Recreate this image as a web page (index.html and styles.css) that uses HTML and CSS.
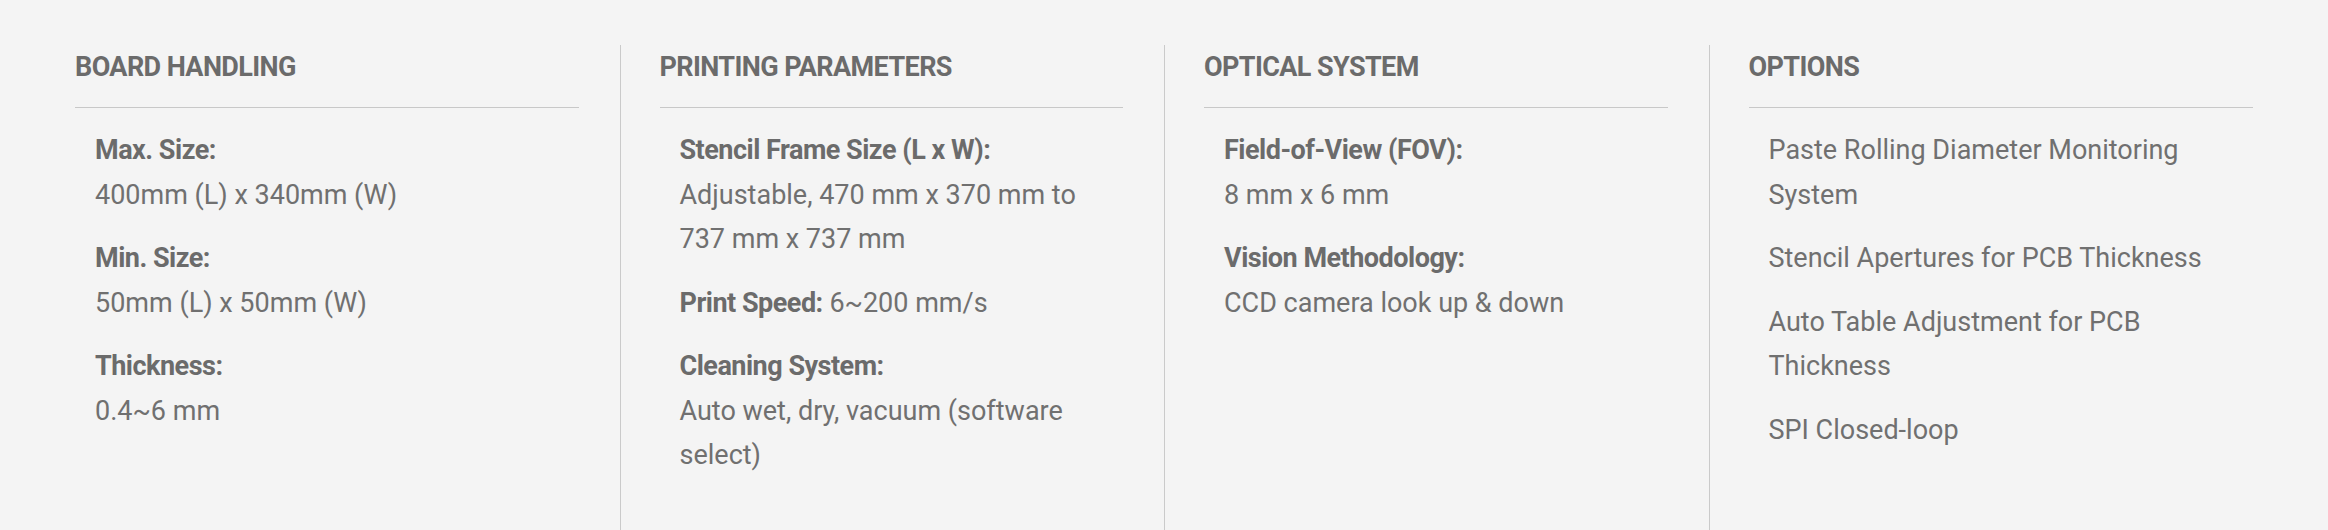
FILE: index.html
```html
<!DOCTYPE html>
<html lang="en">
<head>
<meta charset="utf-8">
<title>Specifications</title>
<link rel="stylesheet" href="styles.css">
</head>
<body>
<section class="specs">
  <div class="spec-col">
    <h3 class="spec-title">BOARD HANDLING</h3>
    <ul class="spec-list">
      <li class="spec-item"><strong class="spec-label">Max. Size:</strong>400mm (L) x 340mm (W)</li>
      <li class="spec-item"><strong class="spec-label">Min. Size:</strong>50mm (L) x 50mm (W)</li>
      <li class="spec-item"><strong class="spec-label">Thickness:</strong>0.4~6 mm</li>
    </ul>
  </div>
  <div class="spec-col">
    <h3 class="spec-title">PRINTING PARAMETERS</h3>
    <ul class="spec-list">
      <li class="spec-item"><strong class="spec-label">Stencil Frame Size (L x W):</strong>Adjustable, 470 mm x 370 mm to 737 mm x 737 mm</li>
      <li class="spec-item"><strong class="spec-label spec-label--inline">Print Speed:</strong> 6~200 mm/s</li>
      <li class="spec-item"><strong class="spec-label">Cleaning System:</strong>Auto wet, dry, vacuum (software select)</li>
    </ul>
  </div>
  <div class="spec-col">
    <h3 class="spec-title">OPTICAL SYSTEM</h3>
    <ul class="spec-list">
      <li class="spec-item"><strong class="spec-label">Field-of-View (FOV):</strong>8 mm x 6 mm</li>
      <li class="spec-item"><strong class="spec-label">Vision Methodology:</strong>CCD camera look up &amp; down</li>
    </ul>
  </div>
  <div class="spec-col">
    <h3 class="spec-title">OPTIONS</h3>
    <ul class="spec-list">
      <li class="spec-item">Paste Rolling Diameter Monitoring System</li>
      <li class="spec-item">Stencil Apertures for PCB Thickness</li>
      <li class="spec-item">Auto Table Adjustment for PCB Thickness</li>
      <li class="spec-item">SPI Closed-loop</li>
    </ul>
  </div>
</section>
</body>
</html>
```

FILE: styles.css
```css
* {
  box-sizing: border-box;
}

html, body {
  margin: 0;
  padding: 0;
}

body {
  background: #f4f4f4;
  color: #707070;
  font-family: Roboto, "Liberation Sans", sans-serif;
}

.specs {
  display: grid;
  grid-template-columns: repeat(4, 1fr);
  min-height: 100vh;
  padding: 45px 75px 0;
}

.spec-col {
  padding: 0 41px 0 39px;
  border-left: 1px solid #cacaca;
}

.spec-col:first-child {
  padding-left: 0;
  border-left: none;
}

.spec-col:last-child {
  padding-right: 0;
}

.spec-title {
  margin: 0;
  padding-bottom: 18px;
  border-bottom: 1px solid #c8c8c8;
  font-size: 27px;
  line-height: 44px;
  font-weight: 700;
  letter-spacing: -0.6px;
  color: #6b6b6b;
}

.spec-list {
  list-style: none;
  margin: 0;
  padding: 20px 4px 0 20px;
}

.spec-item {
  font-size: 27px;
  line-height: 44.5px;
  margin-bottom: 19px;
}

.spec-label {
  display: block;
  font-weight: 700;
  letter-spacing: -0.5px;
  color: #6b6b6b;
}

.spec-label--inline {
  display: inline;
}
```
